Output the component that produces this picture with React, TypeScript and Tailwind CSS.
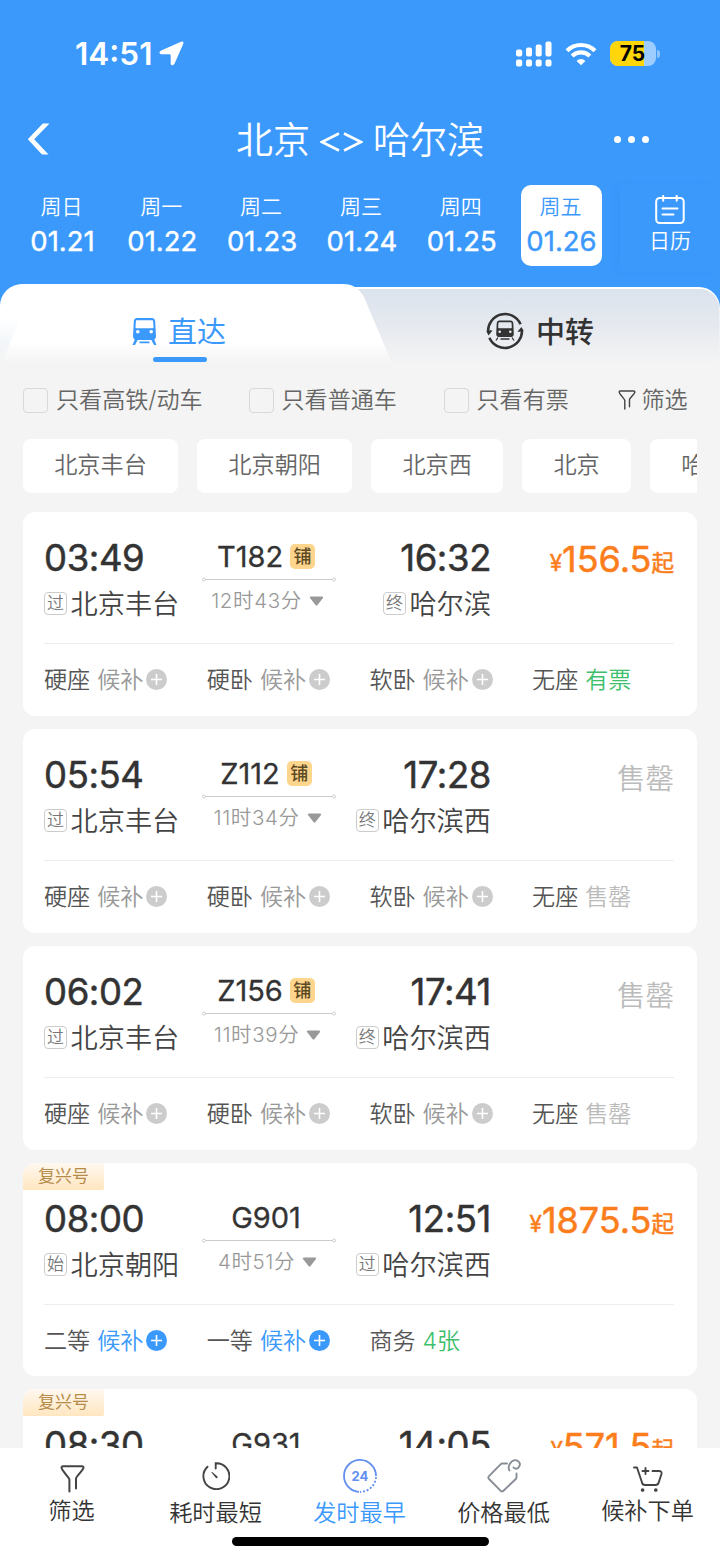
import clsx from 'clsx'

type Seat = { name: string; value: string; kind: 'wait' | 'waitActive' | 'ok' | 'none' }

type Train = {
  no: string
  sleeper?: boolean
  fuxing?: boolean
  dep: string
  arr: string
  from: string
  fromTag: string
  to: string
  toTag: string
  duration: string
  price?: string
  seats: Seat[]
}

const sleeperSeats = (last: Seat): Seat[] => [
  { name: '硬座', value: '候补', kind: 'wait' },
  { name: '硬卧', value: '候补', kind: 'wait' },
  { name: '软卧', value: '候补', kind: 'wait' },
  last,
]

const gSeats: Seat[] = [
  { name: '二等', value: '候补', kind: 'waitActive' },
  { name: '一等', value: '候补', kind: 'waitActive' },
  { name: '商务', value: '4张', kind: 'ok' },
]

const trains: Train[] = [
  {
    no: 'T182', sleeper: true, dep: '03:49', arr: '16:32', from: '北京丰台', fromTag: '过', to: '哈尔滨', toTag: '终',
    duration: '12时43分', price: '156.5', seats: sleeperSeats({ name: '无座', value: '有票', kind: 'ok' }),
  },
  {
    no: 'Z112', sleeper: true, dep: '05:54', arr: '17:28', from: '北京丰台', fromTag: '过', to: '哈尔滨西', toTag: '终',
    duration: '11时34分', seats: sleeperSeats({ name: '无座', value: '售罄', kind: 'none' }),
  },
  {
    no: 'Z156', sleeper: true, dep: '06:02', arr: '17:41', from: '北京丰台', fromTag: '过', to: '哈尔滨西', toTag: '终',
    duration: '11时39分', seats: sleeperSeats({ name: '无座', value: '售罄', kind: 'none' }),
  },
  {
    no: 'G901', fuxing: true, dep: '08:00', arr: '12:51', from: '北京朝阳', fromTag: '始', to: '哈尔滨西', toTag: '过',
    duration: '4时51分', price: '1875.5', seats: gSeats,
  },
]

// Only the top line of this card shows above the bottom bar.
const nextTrain = { no: 'G931', dep: '08:30', arr: '14:05', price: '571.5' }

const days = [
  ['周日', '01.21'],
  ['周一', '01.22'],
  ['周二', '01.23'],
  ['周三', '01.24'],
  ['周四', '01.25'],
  ['周五', '01.26'],
]

function StatusBar() {
  return (
    <div className="flex h-[107px] items-center justify-between pr-[60px] pl-[75px] text-white">
      <div className="flex items-center gap-[7px]">
        <span className="text-[31.500px] leading-none font-semibold">14:51</span>
        <svg width="25" height="25" viewBox="0 0 25 25" fill="currentColor">
          <path d="M22 .7Q25-.2 24.300 2.800L15.500 22.800Q14.500 24.600 13 24.200 11.700 24 11.700 22.500V14.500Q11.700 13.300 10.500 13.300H2.500Q.800 13.200.500 12 .400 10.500 2.200 9.600Z" />
        </svg>
      </div>
      <div className="flex items-center">
        <svg width="36" height="26" viewBox="0 0 36 26" fill="currentColor">
          <rect x="0" y="8.500" width="6.200" height="7" rx="2" />
          <rect x="10" y="6.500" width="6" height="9" rx="2" />
          <rect x="19.700" y="3.500" width="6" height="12" rx="2" />
          <rect x="29.500" y="0.500" width="6" height="15" rx="2" />
          <rect x="0" y="18.500" width="6.200" height="7" rx="2" />
          <rect x="10" y="18.500" width="6" height="7" rx="2" />
          <rect x="19.700" y="18.500" width="6" height="7" rx="2" />
          <rect x="29.500" y="18.500" width="6" height="7" rx="2" />
        </svg>
        <svg className="ml-[13px]" width="32" height="24" viewBox="0 0 32 24" fill="none" stroke="currentColor" strokeWidth="4.200">
          <path d="M2 8.700a20 20 0 0 1 28 0" />
          <path d="M7.100 14a12.600 12.600 0 0 1 17.800 0" />
          <path d="M16 23.300l-4.400-4.400a6.200 6.200 0 0 1 8.800 0z" fill="currentColor" stroke="none" />
        </svg>
        <div className="relative ml-[13px] flex h-[25px] w-[46px] items-center justify-center overflow-hidden rounded-[8px] bg-[#9dccff]">
          <div className="absolute inset-y-0 left-0 w-[34px] bg-[#ffd60a]" />
          <span className="relative pr-[1px] text-[21px] leading-none font-bold text-black">75</span>
        </div>
        <div className="ml-[1px] h-[8px] w-[3px] rounded-r-full bg-[#8dc3ff]" />
      </div>
    </div>
  )
}

function NavBar() {
  return (
    <div className="flex h-[64px] items-center justify-between pr-[71px] pl-[27px] text-white">
      <svg width="23" height="32" viewBox="0 0 23 32" fill="currentColor">
        <path d="M15.800.5H22.500L7.200 16.200 21.500 31.500H15L.800 16.200z" />
      </svg>
      <h1 className="flex items-center gap-[10px] pl-[56px] text-[37px] leading-none font-[350]">
        <span className="pt-[2px]">北京</span>
        <svg width="43" height="20" viewBox="0 0 43 20" fill="none" stroke="currentColor" strokeWidth="2.600" className="mt-[6px]">
          <path d="M19 1.500L2 10l17 8.500M24 1.500L41 10l-17 8.500" />
        </svg>
        <span className="pt-[2px]">哈尔滨</span>
      </h1>
      <div className="flex gap-[7px]">
        <i className="size-[7px] rounded-full bg-white" />
        <i className="size-[7px] rounded-full bg-white" />
        <i className="size-[7px] rounded-full bg-white" />
      </div>
    </div>
  )
}

function DateStrip() {
  return (
    <div className="flex pt-[14px] text-white">
      <div className="flex gap-[18.800px] pl-[22px]">
        {days.map(([name, date], i) => (
          <div
            key={date}
            className={clsx(
              'flex h-[81px] w-[81px] flex-col items-center rounded-[10px] pt-[10px]',
              i === 5 && 'bg-white text-[#3b99fc]',
            )}
          >
            <span className="mr-[2px] h-[24px] text-[21px] leading-[24px] font-[350] whitespace-nowrap">{name}</span>
            <span className="mt-[8px] text-[27.500px] leading-[28px] whitespace-nowrap [-webkit-text-stroke:0.4px]">{date}</span>
          </div>
        ))}
      </div>
      <div className="ml-[18px] flex h-[87px] flex-1 flex-col items-center rounded-[4px] pt-[10px] shadow-[-5px_0_10px_-3px_rgba(30,100,210,0.120)]">
        <svg width="30" height="29" viewBox="0 0 30 29" fill="none" stroke="currentColor" strokeWidth="2" strokeLinecap="round" strokeLinejoin="round">
          <rect x="1.200" y="3" width="27.500" height="25" rx="3.500" />
          <path d="M8.200.8v5M21.700.8v5M7.500 13.500h15M7.500 19.500h11" />
        </svg>
        <span className="mt-[5px] text-[21px] leading-[24px] font-[350]">日历</span>
      </div>
    </div>
  )
}

function TrainIcon() {
  return (
    <svg width="25" height="29" viewBox="0 0 25 29" fill="currentColor">
      <path
        fillRule="evenodd"
        d="M5 1H20C22 1 23 2.500 23.200 4.500L24 19C24 21.500 22.500 23 20.500 23H4.500C2.500 23 1 21.500 1 19L1.800 4.500C2 2.500 3 1 5 1ZM5 3.200C4.200 3.200 3.900 3.700 3.900 4.500L3.500 10C3.500 10.800 3.800 11.200 4.500 11.200H20.500C21.200 11.200 21.500 10.800 21.500 10L21.100 4.500C21.100 3.700 20.800 3.200 20 3.200ZM5.800 13a1.800 1.800 0 1 0 0 3.600 1.800 1.800 0 0 0 0-3.600zM19.200 13a1.800 1.800 0 1 0 0 3.600 1.800 1.800 0 0 0 0-3.600z"
      />
      <path d="M3 22h3.200L3 28H.500zM22 22h-3.200L22 28h2.500zM7.500 24.500h10v1.700h-10z" />
    </svg>
  )
}

function TransferIcon() {
  return (
    <svg width="38" height="38" viewBox="0 0 38 38">
      <g fill="none" stroke="#333" strokeWidth="2.500">
        <path d="M2.030 20A17 17 0 0 1 34.600 12.300" />
        <path d="M35.970 18A17 17 0 0 1 3.400 25.700" />
      </g>
      <path d="M.500 19.500Q3 17.500 6.500 18.500L2.500 23.500zM37.500 18.500Q35 20.500 31.500 19.500L35.500 15z" fill="#333" />
      <path
        fill="#333"
        fillRule="evenodd"
        d="M13 8.500H25Q27 8.500 27.300 11L27.800 22Q27.800 25 25 25H13Q10.200 25 10.200 22L10.700 11Q11 8.500 13 8.500ZM13.500 10.200Q12.500 10.200 12.400 11.200L12.200 15.500Q12.200 16.300 13 16.300H25Q25.800 16.300 25.800 15.500L25.600 11.200Q25.500 10.200 24.500 10.200ZM13.700 18.500a1.300 1.300 0 1 0 0 2.600 1.300 1.300 0 0 0 0-2.600zM24.300 18.500a1.300 1.300 0 1 0 0 2.600 1.300 1.300 0 0 0 0-2.600z"
      />
      <path d="M12 25.500l-2 3M26 25.500l2 3M14.500 27h9" fill="none" stroke="#333" strokeWidth="1.300" />
    </svg>
  )
}

function Tabs() {
  return (
    <div className="relative h-[84px]">
      <svg className="absolute inset-0" width="720" height="84" viewBox="0 0 720 84">
        <defs>
          <linearGradient id="tabRight" x1="0" y1="0" x2="0" y2="1">
            <stop offset="0" stopColor="#dbe3ed" />
            <stop offset="0.450" stopColor="#e5e9ef" />
            <stop offset="0.950" stopColor="#f4f4f4" />
          </linearGradient>
          <linearGradient id="tabLeft" x1="0" y1="0" x2="0" y2="1">
            <stop offset="0" stopColor="#fff" />
            <stop offset="0.680" stopColor="#fff" />
            <stop offset="0.950" stopColor="#f4f4f4" />
          </linearGradient>
          <linearGradient id="tabEdge" x1="0" y1="0" x2="0" y2="1">
            <stop offset="0.400" stopColor="#fff" />
            <stop offset="0.700" stopColor="#f3f6f9" />
            <stop offset="0.950" stopColor="#f4f4f4" />
          </linearGradient>
        </defs>
        <path d="M340 3H699A21 21 0 0 1 720 24V84H340Z" fill="#fff" />
        <path d="M340 5H699A20 20 0 0 1 719.500 26L720 84H340Z" fill="url(#tabRight)" />
        <path d="M0 84V22A22 22 0 0 1 22 0H60V84Z" fill="url(#tabEdge)" />
        <path d="M0 84L24 24V0H343Q357 0 364 13L394 84Z" fill="url(#tabLeft)" />
      </svg>
      <div className="relative grid h-full grid-cols-2">
        <div className="flex flex-col items-center text-[#3b99fc]">
          <div className="flex h-[73px] items-center gap-[11px] pt-[21px] pr-[2px]">
            <TrainIcon />
            <span className="pt-[2px] text-[29px] leading-none font-normal">直达</span>
          </div>
          <div className="h-[5px] w-[54px] rounded-full bg-[#3b99fc]" />
        </div>
        <div className="flex h-[73px] items-center justify-center gap-[12px] pt-[21px] text-[#333]">
          <TransferIcon />
          <span className="pt-[2px] text-[29px] leading-none font-medium">中转</span>
        </div>
      </div>
    </div>
  )
}

function CheckItem({ label, className }: { label: string; className: string }) {
  return (
    <label className={clsx('flex items-center gap-[8px]', className)}>
      <i className="size-[25px] shrink-0 rounded-[4px] border-[1.500px] border-[#d8d8d8]" />
      <span className="pt-[2px]">{label}</span>
    </label>
  )
}

function FunnelIcon({ width, height }: { width: number; height: number }) {
  return (
    <svg width={width} height={height} viewBox="0 0 24 28" fill="none" stroke="#444" strokeWidth="2" strokeLinecap="round" strokeLinejoin="round">
      <path d="M8.900 26.500V14.500C8.900 13 1 5 1 2.800 1 1.700 1.500 1.300 2.500 1.300H21.500C22.500 1.300 23 1.700 23 2.800 23 5 15.500 11.500 15.500 13.500V23.500" />
    </svg>
  )
}

function Filters() {
  return (
    <div className="flex h-[64px] items-center pl-[23px] text-[23.100px] leading-none font-[350] whitespace-nowrap text-[#666]">
      <CheckItem label="只看高铁/动车" className="w-[225.500px]" />
      <CheckItem label="只看普通车" className="w-[195px]" />
      <CheckItem label="只看有票" className="w-[174px]" />
      <FunnelIcon width={18} height={20} />
      <span className="ml-[6px] pt-[2px]">筛选</span>
    </div>
  )
}

function Stations() {
  return (
    <div className="mx-[23px] flex h-[54px] gap-[19px] overflow-hidden text-[23.200px] leading-none font-[350] text-[#666]">
      {['北京丰台', '北京朝阳', '北京西', '北京', '哈尔滨'].map((name) => (
        <div key={name} className="flex h-full shrink-0 items-center rounded-[8px] bg-white px-[31.200px] pt-[1px] whitespace-nowrap">
          {name}
        </div>
      ))}
    </div>
  )
}

function StopTag({ children }: { children: string }) {
  return (
    <span className="flex size-[23px] shrink-0 items-center justify-center rounded-[4px] border border-[#ccc] text-[17px] leading-none text-[#777]">
      {children}
    </span>
  )
}

function Stop({ tag, name }: { tag: string; name: string }) {
  return (
    <div className="mt-[10px] flex h-[30px] items-center gap-[3.500px] text-[27.200px] leading-none font-[350] whitespace-nowrap text-[#444]">
      <StopTag>{tag}</StopTag>
      <span className="pt-[3px]">{name}</span>
    </div>
  )
}

const seatColor = {
  wait: 'text-[#999]',
  waitActive: 'text-[#3b99fc]',
  ok: 'text-[#3dbf6c]',
  none: 'text-[#bbb]',
}

function SeatCell({ seat }: { seat: Seat }) {
  const waiting = seat.kind === 'wait' || seat.kind === 'waitActive'
  return (
    <div className="flex w-[162.700px] shrink-0 items-center text-[23.100px] leading-none font-[350] whitespace-nowrap">
      <span className="pt-[3px] text-[#555]">{seat.name}</span>
      <span className={clsx('ml-[7px] pt-[3px]', seatColor[seat.kind])}>{seat.value}</span>
      {waiting && (
        <svg className="ml-[3px]" width="21" height="21" viewBox="0 0 21 21">
          <circle cx="10.500" cy="10.500" r="10.500" fill={seat.kind === 'wait' ? '#ccc' : '#3b99fc'} />
          <path d="M10.500 5v11M5 10.500h11" stroke="#fff" strokeWidth="1.600" />
        </svg>
      )}
    </div>
  )
}

function Time({ children }: { children: string }) {
  return (
    <div className="h-[41px] pt-[1px] text-[36.500px] leading-[40px] tracking-[-0.400px] text-[#333] [-webkit-text-stroke:0.500px]">{children}</div>
  )
}

function TrainNo({ no, sleeper }: { no: string; sleeper?: boolean }) {
  return (
    <div className="mr-[5px] flex h-[39px] items-center gap-[7px] text-[29px] leading-none text-[#333]">
      <span className="[-webkit-text-stroke:0.300px]">{no}</span>
      {sleeper && (
        <span className="flex size-[25px] items-center justify-center rounded-[5px] bg-[#fdd58d] text-[18px] leading-none font-medium text-[#5c4a24]">
          铺
        </span>
      )}
    </div>
  )
}

function Price({ value }: { value: string }) {
  return (
    <div className="flex h-[44px] items-baseline leading-[44px] text-[#fb7d1b] [-webkit-text-stroke:0.500px]">
      <span className="relative -top-px text-[22.500px]">¥</span>
      <span className="text-[36px]">{value}</span>
      <span className="relative -top-px text-[22.500px]">起</span>
    </div>
  )
}

function FuxingTag() {
  return (
    <div className="absolute top-0 left-0 flex h-[27px] w-[81px] items-center justify-center rounded-br-[2px] bg-linear-to-b from-[#fff8f0] to-[#ffe6c0] text-[17px] leading-none text-[#b58b4a]">
      复兴号
    </div>
  )
}

function TrainCard({ train }: { train: Train }) {
  return (
    <div
      className={clsx(
        'relative shrink-0 overflow-hidden rounded-[12px] bg-white pr-[23px] pl-[21px]',
        train.fuxing ? 'h-[213px] pt-[35px]' : 'h-[204px] pt-[25px]',
      )}
    >
      {train.fuxing && <FuxingTag />}
      <div className="flex h-[106.500px] border-b-[1.500px] border-[#eee]">
        <div className="w-[157.500px]">
          <Time>{train.dep}</Time>
          <Stop tag={train.fromTag} name={train.from} />
        </div>
        <div className="flex w-[134px] flex-col items-center">
          <TrainNo no={train.no} sleeper={train.sleeper} />
          <svg className="mt-[1px]" width="134" height="5" viewBox="0 0 134 5" fill="none" stroke="#ccc">
            <path d="M3.500 2.500h127" />
            <circle cx="2" cy="2.500" r="1.500" />
            <circle cx="132" cy="2.500" r="1.500" />
          </svg>
          <div className="mt-[6px] mr-[2px] flex h-[26px] items-center gap-[7px] text-[20.500px] leading-none font-[350] whitespace-nowrap text-[#999]">
            <span className="tracking-[0.600px]">{train.duration}</span>
            <svg width="15" height="10" viewBox="0 0 15 10" fill="#999">
              <path d="M2 .5h11c1 0 1.500.8 1 1.500l-5.500 7c-.5.7-1.500.7-2 0L1 2C.5 1.300 1 .5 2 .5z" />
            </svg>
          </div>
        </div>
        <div className="flex w-[155.500px] flex-col items-end">
          <Time>{train.arr}</Time>
          <Stop tag={train.toTag} name={train.to} />
        </div>
        <div className="flex flex-1 justify-end">
          {train.price ? (
            <Price value={train.price} />
          ) : (
            <div className="h-[50px] text-[28.500px] leading-[50px] font-[350] text-[#bbb]">售罄</div>
          )}
        </div>
      </div>
      <div className="flex h-[71px] items-center">
        {train.seats.map((seat) => (
          <SeatCell key={seat.name} seat={seat} />
        ))}
      </div>
    </div>
  )
}

function PeekCard() {
  return (
    <div className="relative flex h-[100px] shrink-0 overflow-hidden rounded-[12px] bg-white pt-[35px] pr-[23px] pl-[21px]">
      <FuxingTag />
      <div className="w-[157.500px]">
        <Time>{nextTrain.dep}</Time>
      </div>
      <div className="flex w-[134px] justify-center">
        <TrainNo no={nextTrain.no} />
      </div>
      <div className="flex w-[155.500px] justify-end">
        <Time>{nextTrain.arr}</Time>
      </div>
      <div className="flex flex-1 justify-end">
        <Price value={nextTrain.price} />
      </div>
    </div>
  )
}

function TimerIcon() {
  return (
    <svg width="28" height="28" viewBox="0 0 28 28" fill="none" stroke="#444" strokeWidth="1.900" strokeLinecap="round">
      <path d="M13.700 6.500V1.200A13 13 0 1 1 5.500 4.700" />
      <path d="M9.300 10.300Q9.600 9.700 10.200 10.100L15.500 14.500Q16.200 15.700 14.800 16.200 14 16.300 13.500 15.500Z" fill="#444" stroke="none" />
    </svg>
  )
}

function ClockIcon() {
  return (
    <div className="relative flex size-[34px] items-center justify-center">
      <svg className="absolute inset-0" width="34" height="34" viewBox="0 0 34 34" fill="none" stroke="#628ff0" strokeWidth="1.800">
        <path d="M16 32.900A16 16 0 1 1 33 17" />
        <path d="M33 18A16 16 0 0 1 17 33" strokeDasharray="2 1.800" />
      </svg>
      <span className="text-[13px] leading-none font-bold text-[#628ff0]">24</span>
    </div>
  )
}

function TagIcon() {
  return (
    <svg width="34" height="34" viewBox="0 0 34 34" fill="none" stroke="#888e96" strokeWidth="1.900" strokeLinecap="round" strokeLinejoin="round">
      <path d="M20 4.500H15.500Q14.500 4.500 13.800 5.200L2 17.200Q.700 18.600 2 20L13.500 31.700Q15 33 16.500 31.700L28.800 20Q29.500 19.300 29.500 18.300V14.500" />
      <path d="M22.500 11.500Q20.500 8.500 23 4.500 26 0 30 1.500 34 3.500 32.500 7 30 11.500 26.500 8.500" />
    </svg>
  )
}

function CartIcon() {
  return (
    <svg width="30" height="26" viewBox="0 0 30 26" fill="none" stroke="#444" strokeWidth="1.900" strokeLinecap="round" strokeLinejoin="round">
      <path d="M1 1.500H4L9 16.500Q9.500 19 12 19H22.500Q25 19 25.700 16.500L28.500 8Q29 5 26 5H19.500M9.500 5H15.500M12.500 2V8" />
      <circle cx="9.600" cy="24" r="0.900" />
      <circle cx="22.800" cy="24" r="0.900" />
    </svg>
  )
}

function BottomBar() {
  const items = [
    { label: '筛选', icon: <FunnelIcon width={25} height={28} />, edge: true },
    { label: '耗时最短', icon: <TimerIcon /> },
    { label: '发时最早', icon: <ClockIcon />, active: true },
    { label: '价格最低', icon: <TagIcon /> },
    { label: '候补下单', icon: <CartIcon />, edge: true },
  ]
  return (
    <div className="flex h-[113px] shrink-0 flex-col items-center bg-white">
      <div className="grid h-[89px] w-full grid-cols-5">
        {items.map((item) => (
          <div key={item.label} className="flex flex-col items-center">
            <div className={clsx('flex items-center justify-center', item.edge ? 'h-[49px] pt-[12px]' : 'h-[51px] pt-[5px]')}>{item.icon}</div>
            <span className={clsx('mr-[1px] text-[23.200px] leading-[28px] font-[350] whitespace-nowrap', item.active ? 'text-[#3b99fc]' : 'text-[#333]')}>
              {item.label}
            </span>
          </div>
        ))}
      </div>
      <div className="h-[9px] w-[257px] rounded-full bg-black" />
    </div>
  )
}

export default function App() {
  return (
    <div className="flex h-screen flex-col overflow-hidden bg-[#f4f4f4] font-[Inter,'Noto_Sans_CJK_SC',sans-serif]">
      <div className="h-[310px] shrink-0 bg-[#3b99fc]">
        <StatusBar />
        <NavBar />
        <DateStrip />
      </div>
      <div className="relative -mt-[26px] shrink-0">
        <Tabs />
        <Filters />
        <div className="pt-[6.500px]">
          <Stations />
        </div>
      </div>
      <div className="flex min-h-0 flex-1 flex-col gap-[13px] overflow-hidden px-[23px] pt-[19.500px]">
        {trains.map((train) => (
          <TrainCard key={train.no} train={train} />
        ))}
        <PeekCard />
      </div>
      <BottomBar />
    </div>
  )
}
